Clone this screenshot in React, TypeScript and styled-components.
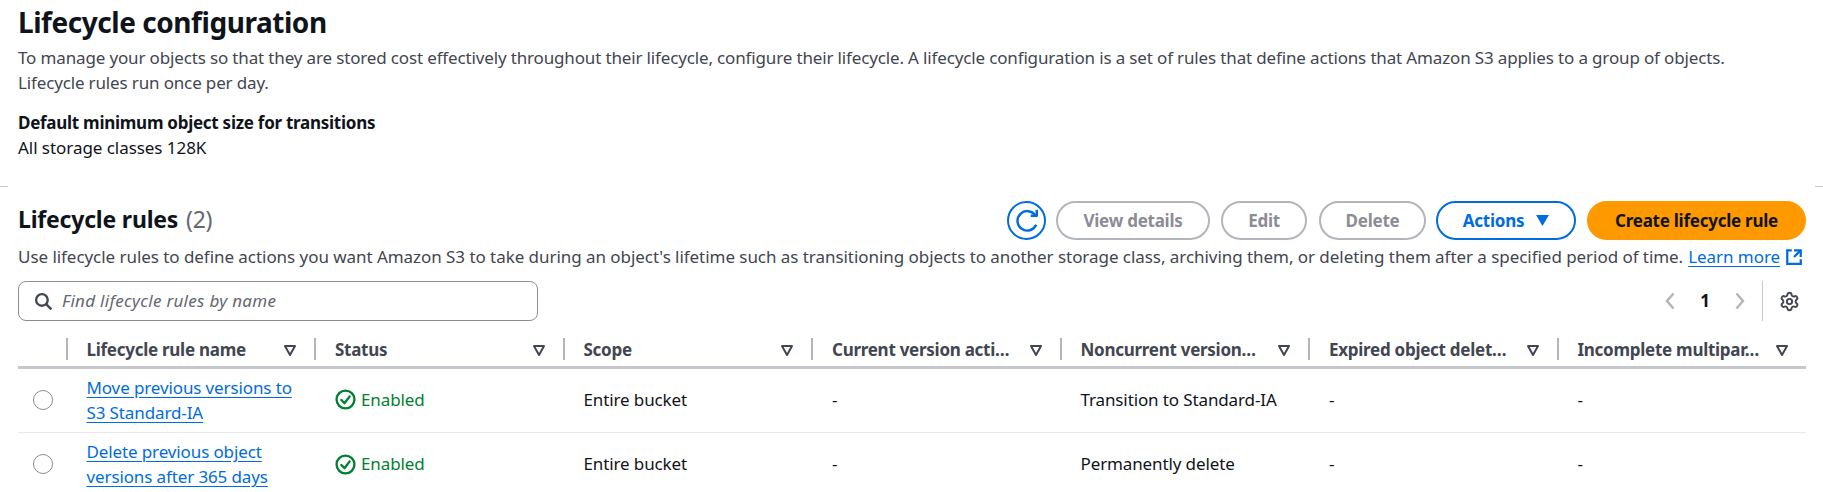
import React from 'react';
import styled, { createGlobalStyle } from 'styled-components';
import { Settings } from 'lucide-react';

const GlobalStyle = createGlobalStyle`
  html, body {
    margin: 0;
    padding: 0;
    background: #ffffff;
  }
  body {
    font-family: "Noto Sans", "Open Sans", Arial, sans-serif;
    font-size: 17px;
    line-height: 24px;
    letter-spacing: -0.12px;
    color: #0f141a;
  }
`;

const Page = styled.div`
  width: 1823px;
  height: 492px;
  overflow: hidden;
  position: relative;
`;

const Intro = styled.section`
  padding: 4px 17px 0 18px;
  height: 186px;
  box-sizing: border-box;
`;

const Title = styled.h1`
  margin: 0 0 6px;
  font-size: 28px;
  line-height: 36px;
  font-weight: 700;
  letter-spacing: -0.45px;
`;

const Lead = styled.p`
  margin: 0;
  color: #424650;
  line-height: 24.5px;
  letter-spacing: -0.15px;
`;

const FieldLabel = styled.div`
  margin-top: 16px;
  font-weight: 700;
  letter-spacing: -0.27px;
`;

const FieldValue = styled.div`
  line-height: 25px;
  letter-spacing: -0.05px;
`;

const EdgeMark = styled.div<{ $side: 'left' | 'right' }>`
  position: absolute;
  top: 186px;
  ${(p) => p.$side}: 0;
  width: 8px;
  height: 1px;
  background: #c6c6cd;
`;

const Rules = styled.section`
  padding: 15px 17px 0 18px;
`;

const HeaderRow = styled.div`
  display: flex;
  align-items: center;
  justify-content: space-between;
  height: 39px;
`;

const SectionTitle = styled.h2`
  margin: 0 0 3px;
  font-size: 23px;
  line-height: 28px;
  font-weight: 700;
  letter-spacing: -0.2px;
`;

const Count = styled.span`
  font-weight: 400;
  color: #656871;
  margin-left: 2px;
`;

const Actions = styled.div`
  display: flex;
  align-items: center;
`;

const Button = styled.button<{ $width: number; $gap?: number; $kind: 'disabled' | 'normal' | 'primary' }>`
  box-sizing: border-box;
  width: ${(p) => p.$width}px;
  height: 39px;
  margin-left: ${(p) => p.$gap ?? 10}px;
  padding: 0;
  display: flex;
  align-items: center;
  justify-content: center;
  gap: 12px;
  border-radius: 20px;
  font: 700 17px/22px "Noto Sans", Arial, sans-serif;
  letter-spacing: -0.25px;
  background: ${(p) => (p.$kind === 'primary' ? '#ff9900' : '#ffffff')};
  color: ${(p) => (p.$kind === 'primary' ? '#0f141a' : p.$kind === 'normal' ? '#006ce0' : '#8c8c94')};
  border: 2px solid ${(p) => (p.$kind === 'primary' ? '#ff9900' : p.$kind === 'normal' ? '#006ce0' : '#b4b4bb')};
`;

const HelpLine = styled.p`
  margin: 5px 0 0;
  height: 24px;
  color: #424650;
  white-space: nowrap;
  letter-spacing: -0.05px;
`;

const Link = styled.a`
  color: #006ce0;
  text-decoration: underline;
  text-underline-offset: 3px;
`;

const ExternalLink = styled(Link)`
  margin-left: 5px;
`;

const ExternalGlyph = styled.span`
  display: inline-block;
  margin-left: 5px;
  vertical-align: -3px;
  line-height: 0;
`;

const FilterRow = styled.div`
  display: flex;
  align-items: center;
  justify-content: space-between;
  margin-top: 12px;
  height: 40px;
`;

const SearchBox = styled.div`
  box-sizing: border-box;
  width: 520px;
  height: 40px;
  display: flex;
  align-items: center;
  gap: 9px;
  padding: 0 15px;
  border: 1px solid #8c8c94;
  border-radius: 8px;
`;

const SearchHint = styled.span`
  font-style: italic;
  color: #656871;
  letter-spacing: 0.3px;
`;

const Pager = styled.div`
  display: flex;
  align-items: center;
  height: 40px;
  padding-right: 6px;
`;

const PageNumber = styled.span`
  width: 58px;
  text-align: center;
  font-weight: 700;
`;

const PrefsSlot = styled.div`
  margin-left: 16px;
  padding-left: 16px;
  height: 40px;
  display: flex;
  align-items: center;
  border-left: 1px solid #c6c6cd;
`;

const Table = styled.div`
  display: grid;
  grid-template-columns: 47.5px repeat(6, 248.5px) 249.5px;
  margin-top: 7px;
`;

const HeadCell = styled.div`
  height: 41px;
  box-sizing: border-box;
  display: flex;
  align-items: center;
  justify-content: space-between;
  padding: 5px 17px 0 21px;
  border-bottom: 3px solid #c6c6cd;
  font-weight: 700;
  color: #424650;
  letter-spacing: -0.27px;
  white-space: nowrap;
  position: relative;
  &::before {
    content: '';
    position: absolute;
    left: 0;
    top: 10px;
    height: 22px;
    width: 2px;
    background: #b4b4bb;
  }
`;

const BlankHead = styled.div`
  height: 41px;
  box-sizing: border-box;
  border-bottom: 3px solid #c6c6cd;
`;

const Cell = styled.div<{ $last?: boolean }>`
  box-sizing: border-box;
  height: ${(p) => (p.$last ? 62 : 64)}px;
  display: flex;
  align-items: center;
  padding-left: 21px;
  padding-bottom: ${(p) => (p.$last ? 0 : 2)}px;
  border-bottom: ${(p) => (p.$last ? 'none' : '1px solid #e8e8ed')};
`;

const RadioCell = styled(Cell)`
  padding-left: 15px;
`;

const Radio = styled.span`
  box-sizing: border-box;
  width: 20px;
  height: 20px;
  border-radius: 50%;
  border: 1.5px solid #8c8c94;
`;

const RuleLink = styled(Link)`
  line-height: 25px;
`;

const Status = styled.span`
  display: inline-flex;
  align-items: center;
  gap: 5px;
  color: #00802f;
`;

const SortIcon = () => (
  <svg width="14" height="14" viewBox="0 0 14 14" fill="none">
    <path d="M2 3h10L7 12z" stroke="#424650" strokeWidth="2" strokeLinejoin="round" />
  </svg>
);

const StatusIcon = () => (
  <svg width="21" height="21" viewBox="0 0 20 20" fill="none" stroke="#00802f" strokeWidth="2.2">
    <circle cx="10" cy="10" r="8.5" />
    <path d="M6 10.5l3 3 5-6.5" strokeLinecap="round" strokeLinejoin="round" />
  </svg>
);

const RefreshIcon = () => (
  <svg width="30" height="30" viewBox="0 0 16 16" fill="none" stroke="#006ce0" strokeWidth="1.3">
    <path d="M10 5.2h3.2V2" strokeLinejoin="round" />
    <path d="M12.9 10a5.2 5.2 0 1 1-.4-4.9" />
  </svg>
);

const ExternalIcon = () => (
  <svg width="18" height="18" viewBox="0 0 16 16" fill="none" stroke="#006ce0" strokeWidth="2">
    <path d="M14 8V2H8M14 2L8 8" />
    <path d="M6 2H2v12h12v-4" />
  </svg>
);

const SearchIcon = () => (
  <svg width="19" height="19" viewBox="0 0 18 18" fill="none" stroke="#424650" strokeWidth="2.2">
    <circle cx="7.5" cy="7.5" r="5.5" />
    <path d="M11.5 11.5L16.5 16.5" />
  </svg>
);

const Chevron = ({ dir }: { dir: 'left' | 'right' }) => (
  <svg width="12" height="20" viewBox="0 0 12 20" fill="none" stroke="#b4b4bb" strokeWidth="2.5">
    <path d={dir === 'left' ? 'M9.5 2.5L3 10l6.5 7.5' : 'M2.5 2.5L9 10l-6.5 7.5'} />
  </svg>
);

const headers = [
  'Lifecycle rule name',
  'Status',
  'Scope',
  'Current version acti…',
  'Noncurrent version…',
  'Expired object delet…',
  'Incomplete multipar…',
];

const rows = [
  { name: ['Move previous versions to', 'S3 Standard-IA'], noncurrent: 'Transition to Standard-IA' },
  { name: ['Delete previous object', 'versions after 365 days'], noncurrent: 'Permanently delete' },
];

export default function App() {
  return (
    <Page>
      <GlobalStyle />
      <Intro>
        <Title>Lifecycle configuration</Title>
        <Lead>
          To manage your objects so that they are stored cost effectively throughout their lifecycle, configure their
          lifecycle. A lifecycle configuration is a set of rules that define actions that Amazon S3 applies to a group of
          objects.
          <br />
          Lifecycle rules run once per day.
        </Lead>
        <FieldLabel>Default minimum object size for transitions</FieldLabel>
        <FieldValue>All storage classes 128K</FieldValue>
      </Intro>
      <EdgeMark $side="left" />
      <EdgeMark $side="right" />
      <Rules>
        <HeaderRow>
          <SectionTitle>
            Lifecycle rules <Count>(2)</Count>
          </SectionTitle>
          <Actions>
            <Button $kind="normal" $width={39}>
              <RefreshIcon />
            </Button>
            <Button $kind="disabled" $width={154}>View details</Button>
            <Button $kind="disabled" $width={86} $gap={11}>Edit</Button>
            <Button $kind="disabled" $width={107} $gap={12}>Delete</Button>
            <Button $kind="normal" $width={140}>
              Actions
              <svg width="13" height="11" viewBox="0 0 14 12">
                <path d="M0 0h14L7 12z" fill="#006ce0" />
              </svg>
            </Button>
            <Button $kind="primary" $width={219} $gap={11}>Create lifecycle rule</Button>
          </Actions>
        </HeaderRow>
        <HelpLine>
          Use lifecycle rules to define actions you want Amazon S3 to take during an object's lifetime such as
          transitioning objects to another storage class, archiving them, or deleting them after a specified period of
          time.
          <ExternalLink>Learn more</ExternalLink>
          <ExternalGlyph>
            <ExternalIcon />
          </ExternalGlyph>
        </HelpLine>
        <FilterRow>
          <SearchBox>
            <SearchIcon />
            <SearchHint>Find lifecycle rules by name</SearchHint>
          </SearchBox>
          <Pager>
            <Chevron dir="left" />
            <PageNumber>1</PageNumber>
            <Chevron dir="right" />
            <PrefsSlot>
              <Settings size={21} color="#424650" strokeWidth={2.2} />
            </PrefsSlot>
          </Pager>
        </FilterRow>
        <Table>
          <BlankHead />
          {headers.map((h) => (
            <HeadCell key={h}>
              {h}
              <SortIcon />
            </HeadCell>
          ))}
          {rows.map((row, i) => {
            const last = i === rows.length - 1;
            return (
              <React.Fragment key={row.name[0]}>
                <RadioCell $last={last}>
                  <Radio />
                </RadioCell>
                <Cell $last={last}>
                  <RuleLink>
                    {row.name[0]}
                    <br />
                    {row.name[1]}
                  </RuleLink>
                </Cell>
                <Cell $last={last}>
                  <Status>
                    <StatusIcon />
                    Enabled
                  </Status>
                </Cell>
                <Cell $last={last}>Entire bucket</Cell>
                <Cell $last={last}>-</Cell>
                <Cell $last={last}>{row.noncurrent}</Cell>
                <Cell $last={last}>-</Cell>
                <Cell $last={last}>-</Cell>
              </React.Fragment>
            );
          })}
        </Table>
      </Rules>
    </Page>
  );
}
